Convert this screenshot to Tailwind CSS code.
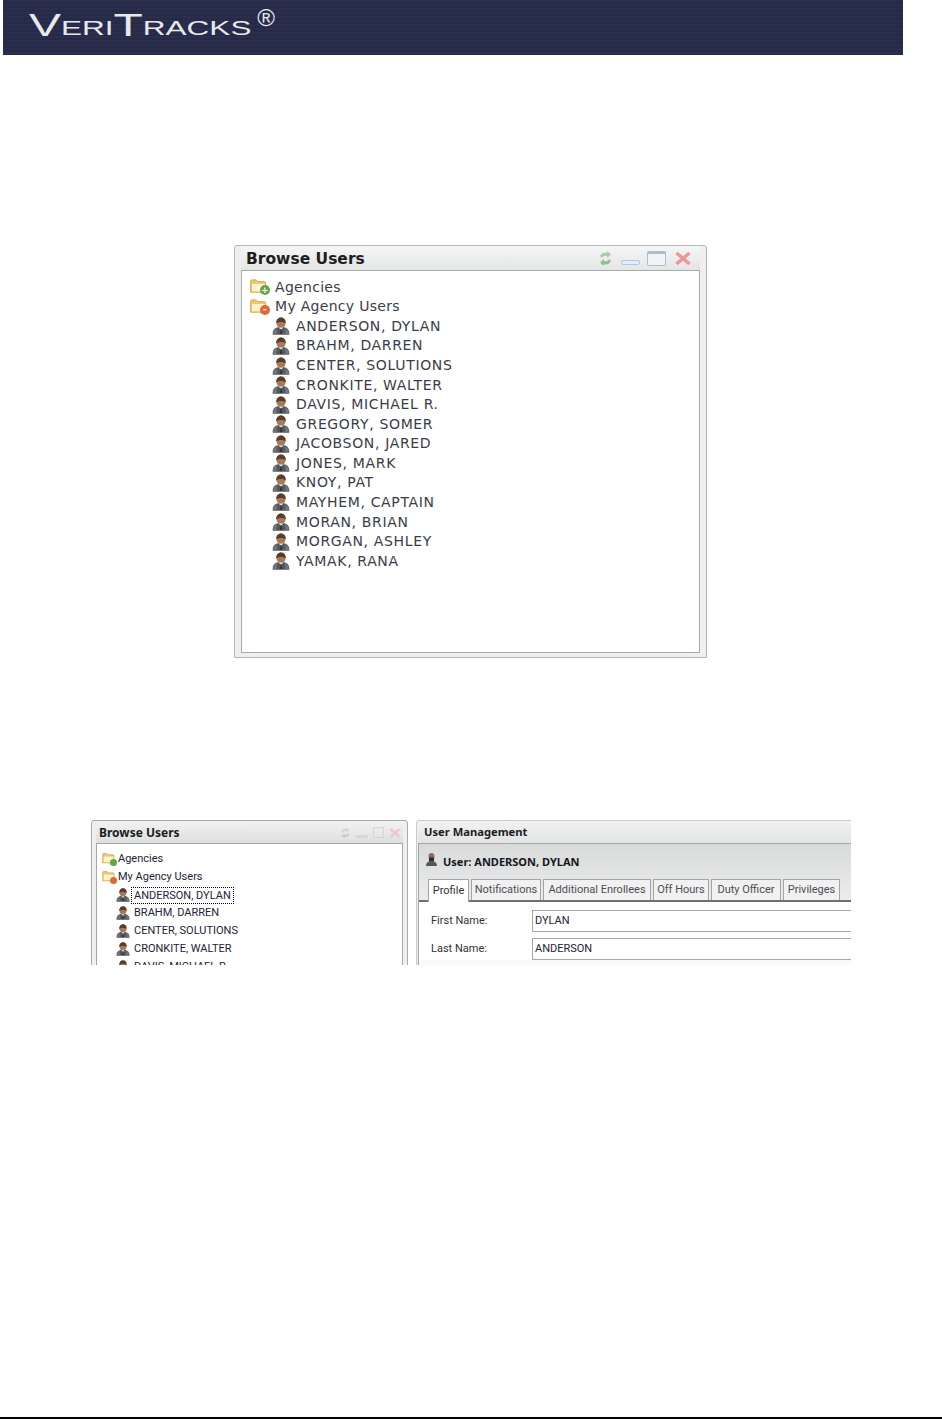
<!DOCTYPE html>
<html>
  <head>
    <meta charset="UTF-8" />
    <meta name="viewport" content="width=device-width, initial-scale=1.0" />
    <script src="https://cdn.jsdelivr.net/npm/@tailwindcss/browser@4"></script>
  </head>

  <body class="bg-white">
    <svg class="hidden">
      <symbol id="person" viewBox="0 0 18 18">
        <path d="M.6 17c0-3.800 1.700-6 5.200-6.800h6.400c3.500.8 5.200 3 5.200 6.800 0 .4-.3.700-.7.700H1.300c-.4 0-.7-.3-.7-.7z" fill="#55595d" />
        <path d="M1 16.500c.5-2.500 2-4.500 4-5.500l-.5 6H1.500zM17 16.500c-.5-2.500-2-4.500-4-5.500l.5 6h3z" fill="#73777b" />
        <path d="M4.500 6C4.500 2.500 6.500.6 9 .6s4.500 1.900 4.500 5.400c0 2.500-1.800 5-4.500 5S4.500 8.500 4.500 6z" fill="#a87a58" />
        <path d="M4.300 6.500C3.800 2.500 6.300.4 9 .4s5.200 2.100 4.700 6.100C12.500 4.500 5.500 4.500 4.300 6.500z" fill="#5a3d2a" />
        <path d="M7 10.500h4L9 14z" fill="#e4e4e4" />
        <path d="M8.300 12h1.400l.5 5H7.800z" fill="#35373a" />
      </symbol>
      <symbol id="folder" viewBox="0 0 21 17">
        <path d="M1 2.500C1 1.700 1.500 1 2.300 1h5l2 2h7.500c.8 0 1.200.6 1.200 1.300V15H1z" fill="#eec56f" stroke="#c9a552" stroke-width="1" />
        <path d="M2.500 5.500h14.500v8.500H2.500z" fill="#fdf3cb" />
      </symbol>
    </svg>

    <div class="flex min-h-[1419px] flex-col">
      <header class="ml-[3px] flex h-[55px] w-[900px] items-center bg-[#282c4a] bg-[repeating-linear-gradient(to_bottom,#2a2e4d_0px,#2a2e4d_2px,#262a48_2px,#262a48_4px)] pb-[6px] pl-[26px] font-['Liberation_Sans',sans-serif] text-[#e6e8ea]">
        <div class="flex origin-left scale-x-[1.5] items-center">
          <span class="text-[32px] leading-none">V</span>
          <span class="mt-[6px] text-[21px] leading-none">ERI</span>
          <span class="text-[32px] leading-none">T</span>
          <span class="mt-[6px] text-[21px] leading-none">RACKS</span>
        </div>
        <span class="mb-[13px] ml-[80px] text-[24px] leading-none">®</span>
      </header>

      <!-- big browse users window -->
      <section class="ml-[234px] mt-[190px] flex h-[413px] w-[473px] flex-col rounded-t-[3px] border border-[#b4b7b8] bg-[#eef0ef] px-[6px] pb-[4px] font-['DejaVu_Sans',sans-serif]">
        <div class="flex h-[24px] shrink-0 items-center justify-between bg-gradient-to-b from-[#f6f6f6] to-[#e4e5e5] pl-[5px] pr-[8px] pt-[3px]">
          <h2 class="text-[15.500px] font-bold text-[#1e1e1e]">Browse Users</h2>
          <div class="mb-[3px] flex items-center">
            <svg width="15" height="17" viewBox="0 0 15 17">
              <path d="M2 6c1-3 5-4 7-3V1l4 3.500L9 8V6C7 5.500 5 6 4 8z" fill="#a3cfa3" />
              <path d="M13 11c-1 3-5 4-7 3v2l-4-3.500L6 9v2c2 .5 4 0 5-2z" fill="#8fc08f" />
            </svg>
            <div class="ml-[8px] mt-[8px] h-[5px] w-[19px] rounded-[2px] border border-[#b3c6dc] bg-[#e4edf7]"></div>
            <div class="ml-[7px] h-[15px] w-[19px] rounded-[2px] border border-[#a9bdd4] border-t-[3px] bg-[#f0f4f9]"></div>
            <svg class="ml-[8px]" width="18" height="15" viewBox="0 0 18 15">
              <path d="M2.500 2l13 11M15.500 2l-13 11" stroke="#ef9797" stroke-width="3.500" />
            </svg>
          </div>
        </div>
        <div class="flex-1 border border-[#a8abab] bg-white pl-[7px] pt-[6.500px] text-[14px] tracking-[.3px] text-[#3c3c48]">
          <div class="flex h-[19.570px] items-center gap-[4px]">
            <span class="relative h-[16px] w-[22px]">
              <svg class="h-[15px] w-[20px]"><use href="#folder" /></svg>
              <span class="absolute bottom-0 right-[1px] flex h-[10px] w-[10px] items-center justify-center rounded-full bg-[#5da845] text-[9px] font-bold leading-none text-white">+</span>
            </span>
            Agencies
          </div>
          <div class="flex h-[19.570px] items-center gap-[4px]">
            <span class="relative h-[16px] w-[22px]">
              <svg class="h-[15px] w-[20px]"><use href="#folder" /></svg>
              <span class="absolute bottom-0 right-[1px] flex h-[10px] w-[10px] items-center justify-center rounded-full bg-[#e0673a] text-[9px] font-bold leading-none text-white">-</span>
            </span>
            My Agency Users
          </div>
          <ul class="pl-[23px] tracking-[.65px]">
            <li class="flex h-[19.570px] items-center gap-[6px]"><svg class="h-[18px] w-[18px]"><use href="#person" /></svg>ANDERSON, DYLAN</li>
            <li class="flex h-[19.570px] items-center gap-[6px]"><svg class="h-[18px] w-[18px]"><use href="#person" /></svg>BRAHM, DARREN</li>
            <li class="flex h-[19.570px] items-center gap-[6px]"><svg class="h-[18px] w-[18px]"><use href="#person" /></svg>CENTER, SOLUTIONS</li>
            <li class="flex h-[19.570px] items-center gap-[6px]"><svg class="h-[18px] w-[18px]"><use href="#person" /></svg>CRONKITE, WALTER</li>
            <li class="flex h-[19.570px] items-center gap-[6px]"><svg class="h-[18px] w-[18px]"><use href="#person" /></svg>DAVIS, MICHAEL R.</li>
            <li class="flex h-[19.570px] items-center gap-[6px]"><svg class="h-[18px] w-[18px]"><use href="#person" /></svg>GREGORY, SOMER</li>
            <li class="flex h-[19.570px] items-center gap-[6px]"><svg class="h-[18px] w-[18px]"><use href="#person" /></svg>JACOBSON, JARED</li>
            <li class="flex h-[19.570px] items-center gap-[6px]"><svg class="h-[18px] w-[18px]"><use href="#person" /></svg>JONES, MARK</li>
            <li class="flex h-[19.570px] items-center gap-[6px]"><svg class="h-[18px] w-[18px]"><use href="#person" /></svg>KNOY, PAT</li>
            <li class="flex h-[19.570px] items-center gap-[6px]"><svg class="h-[18px] w-[18px]"><use href="#person" /></svg>MAYHEM, CAPTAIN</li>
            <li class="flex h-[19.570px] items-center gap-[6px]"><svg class="h-[18px] w-[18px]"><use href="#person" /></svg>MORAN, BRIAN</li>
            <li class="flex h-[19.570px] items-center gap-[6px]"><svg class="h-[18px] w-[18px]"><use href="#person" /></svg>MORGAN, ASHLEY</li>
            <li class="flex h-[19.570px] items-center gap-[6px]"><svg class="h-[18px] w-[18px]"><use href="#person" /></svg>YAMAK, RANA</li>
          </ul>
        </div>
      </section>

      <!-- cropped screenshot with both panels -->
      <section class="ml-[91px] mt-[162px] flex h-[145px] w-[760px] gap-[8px] overflow-hidden font-['Roboto',sans-serif] text-[11px] text-[#222]">
        <div class="h-[200px] w-[317px] shrink-0 rounded-t-[3px] border border-[#a9abab] bg-[#efefef] pl-[4px] pr-[4px]">
          <div class="flex h-[22px] items-center justify-between bg-gradient-to-b from-[#f2f2f2] to-[#dedfdf] pl-[3px] pr-[2px] pt-[1px]">
            <h2 class="font-['Noto_Sans',sans-serif] text-[12px] font-bold text-[#1c1c1c]">Browse Users</h2>
            <div class="flex items-center gap-[5px]">
              <svg width="11" height="12" viewBox="0 0 15 17">
                <path d="M2 6c1-3 5-4 7-3V1l4 3.500L9 8V6C7 5.500 5 6 4 8z" fill="#cfd5cf" />
                <path d="M13 11c-1 3-5 4-7 3v2l-4-3.500L6 9v2c2 .5 4 0 5-2z" fill="#c6cdc6" />
              </svg>
              <div class="mt-[7px] h-[3px] w-[12px] bg-[#d5d8da]"></div>
              <div class="h-[11px] w-[11px] border border-[#d3d6d9]"></div>
              <svg width="12" height="12" viewBox="0 0 17 15">
                <path d="M2.500 2l12 11M14.500 2l-12 11" stroke="#edc5c8" stroke-width="3.500" />
              </svg>
            </div>
          </div>
          <div class="h-[170px] border border-[#a5a7a7] bg-white pl-[5px] pt-[6px] text-[#262233]">
            <div class="flex h-[18px] items-center gap-[1px]">
              <span class="relative h-[14px] w-[15px]">
                <svg class="h-[13px] w-[14px]"><use href="#folder" /></svg>
                <span class="absolute bottom-0 right-0 h-[7px] w-[7px] rounded-full bg-[#5da845]"></span>
              </span>
              Agencies
            </div>
            <div class="flex h-[18px] items-center gap-[1px]">
              <span class="relative h-[14px] w-[15px]">
                <svg class="h-[13px] w-[14px]"><use href="#folder" /></svg>
                <span class="absolute bottom-0 right-0 h-[7px] w-[7px] rounded-full bg-[#dd6b36]"></span>
              </span>
              My Agency Users
            </div>
            <ul class="pl-[14px]">
              <li class="flex h-[18px] items-center"><svg class="mr-[1px] h-[14px] w-[14px]"><use href="#person" /></svg><span class="border border-dotted border-black px-[2px] leading-[15px]">ANDERSON, DYLAN</span></li>
              <li class="flex h-[18px] items-center"><svg class="mr-[4px] h-[14px] w-[14px]"><use href="#person" /></svg>BRAHM, DARREN</li>
              <li class="flex h-[18px] items-center"><svg class="mr-[4px] h-[14px] w-[14px]"><use href="#person" /></svg>CENTER, SOLUTIONS</li>
              <li class="flex h-[18px] items-center"><svg class="mr-[4px] h-[14px] w-[14px]"><use href="#person" /></svg>CRONKITE, WALTER</li>
              <li class="flex h-[18px] items-center"><svg class="mr-[4px] h-[14px] w-[14px]"><use href="#person" /></svg>DAVIS, MICHAEL R.</li>
            </ul>
          </div>
        </div>

        <div class="h-[200px] w-[480px] shrink-0 rounded-t-[3px] border border-[#c9cbcb] bg-[#efefef] px-[1px]">
          <div class="flex h-[22px] items-center bg-gradient-to-b from-[#f2f2f2] to-[#e2e3e3] pl-[6px] pt-[1px]">
            <h2 class="font-['Noto_Sans',sans-serif] text-[11.200px] font-bold text-[#1c1c1c]">User Management</h2>
          </div>
          <div class="h-[170px] border border-[#a5a7a7] bg-gradient-to-b from-[#d8d9d9] via-[#f6f6f6] to-white">
            <div class="flex h-[36px] items-center gap-[5px] pl-[6px]">
              <svg class="mb-[5px] h-[15px] w-[13px]" viewBox="0 0 13 15">
                <path d="M3.500 4c0-2 1.200-3 3-3s3 1 3 3c0 1-.5 3-1 4h-4C4 7 3.500 5 3.500 4z" fill="#8a6a58" />
                <path d="M4 5.500h5v3.500H4z" fill="#2a2a2a" />
                <path d="M1 14c0-3 2-5 5.500-5S12 11 12 14z" fill="#55585a" />
              </svg>
              <h3 class="font-['Noto_Sans',sans-serif] text-[11px] font-bold text-[#15151f]">User: ANDERSON, DYLAN</h3>
            </div>
            <div class="flex h-[22px] items-end gap-[2px] border-b-2 border-[#6f7072] pl-[9px] text-[11px] text-[#4a4f55]">
              <div class="relative top-[2px] flex h-[23px] w-[41px] items-center justify-center border border-b-0 border-[#a2a4a6] bg-white text-[#333]">Profile</div>
              <div class="flex h-[21px] w-[70px] items-center justify-center border border-b-0 border-[#a2a4a6] bg-[#f1f1f1]">Notifications</div>
              <div class="flex h-[21px] w-[108px] items-center justify-center border border-b-0 border-[#a2a4a6] bg-[#f1f1f1]">Additional Enrollees</div>
              <div class="flex h-[21px] w-[56px] items-center justify-center border border-b-0 border-[#a2a4a6] bg-[#f1f1f1]">Off Hours</div>
              <div class="flex h-[21px] w-[70px] items-center justify-center border border-b-0 border-[#a2a4a6] bg-[#f1f1f1]">Duty Officer</div>
              <div class="flex h-[21px] w-[57px] items-center justify-center border border-b-0 border-[#a2a4a6] bg-[#f1f1f1]">Privileges</div>
            </div>
            <div class="grid grid-cols-[101px_1fr] gap-y-[6px] bg-white pl-[12px] pt-[8px] text-[11px] text-[#333]">
              <label class="flex items-center">First Name:</label>
              <div class="flex h-[22px] items-center border border-r-0 border-[#a5a7a7] pl-[2px] text-[#262233]">DYLAN</div>
              <label class="flex items-center">Last Name:</label>
              <div class="flex h-[22px] items-center border border-r-0 border-[#a5a7a7] pl-[2px] text-[#262233]">ANDERSON</div>
            </div>
          </div>
        </div>
      </section>

      <footer class="mt-auto h-[2px] bg-black"></footer>
    </div>
  </body>
</html>
